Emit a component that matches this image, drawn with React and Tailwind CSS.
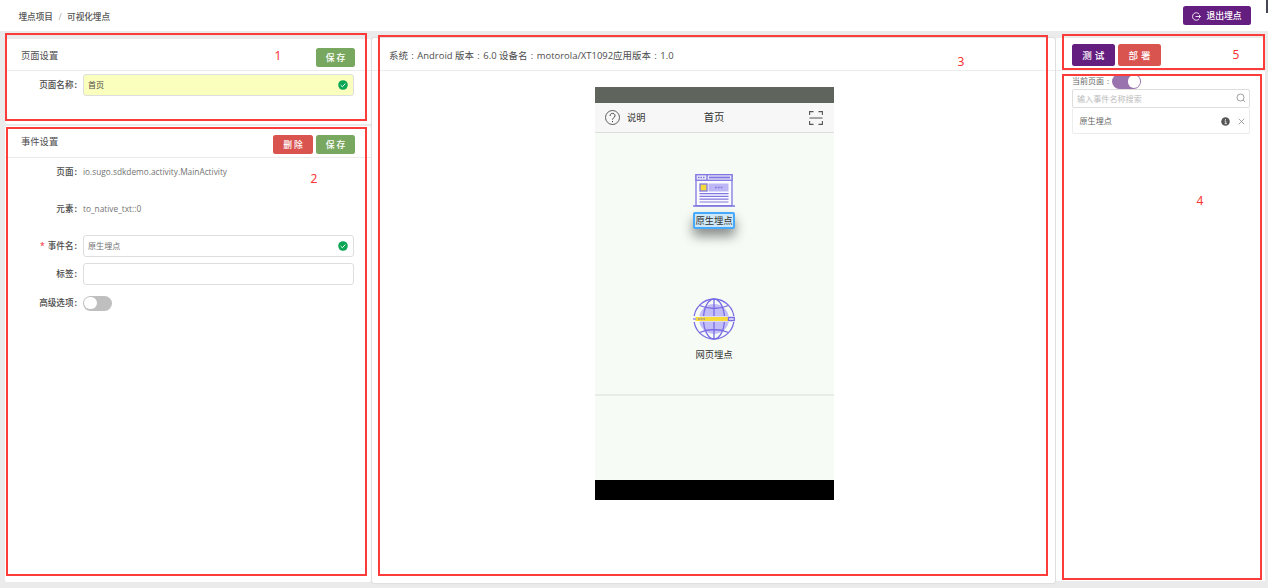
import React from 'react';

const CheckBadge = () => (
  <svg className="h-[10px] w-[10px]" viewBox="0 0 18 18">
    <circle cx="9" cy="9" r="8.6" fill="#0aa653" />
    <path d="M4.8 9.2l3 3 5.4-5.8" fill="none" stroke="#fff" strokeWidth="1.7" />
  </svg>
);

const Button = ({ className, children }) => (
  <button className={`flex items-center justify-center rounded-[2.5px] pt-px font-medium text-white ${className}`}>{children}</button>
);

const Colon = () => (
  <span className="inline-block w-[1em] text-center font-['Open_Sans']">:</span>
);

const Row = ({ label, required, className, children }) => (
  <div className={`flex items-center ${className}`}>
    <div className="w-[78px] shrink-0 whitespace-nowrap text-right text-[8.6px] font-medium text-[#4a4a4a]">
      {required && <span className="mr-[3px] text-[#f5222d]">*</span>}
      {label}<span className="ml-[1px] mr-[1px] font-bold">:</span>
    </div>
    <div className="ml-[5px] flex w-[270.5px] items-center text-[8.3px] text-[#737373]">{children}</div>
  </div>
);

const Field = ({ value, valid, className }) => (
  <div className={`flex h-[22px] w-full items-center justify-between rounded-[3px] border border-[#dedede] pl-[4px] pr-[5px] text-[8.1px] ${className}`}>
    <span>{value}</span>
    {valid && <CheckBadge />}
  </div>
);

const Region = ({ n, box, label }) => (
  <>
    <div className={`pointer-events-none absolute border-2 border-[#fc3b3b] ${box}`} />
    <span className={`absolute w-[10px] text-center font-['Noto_Sans'] text-[12px] leading-[14px] text-[#fa3434] ${label}`}>{n}</span>
  </>
);

const BrowserIcon = () => (
  <svg className="h-[33px] w-[42px]" viewBox="0 0 42 33" fill="none" stroke="#8078e0" strokeWidth="1.3">
    <rect x="3" y="0.7" width="36" height="31" fill="#fbfbff" />
    <rect x="3" y="0.7" width="36" height="5.6" fill="#e9e7fb" />
    <path d="M14 1v5M0 32h42" />
    <path d="M16 3.5h21" strokeWidth="1.8" />
    <path d="M5 3.5h7" strokeDasharray="1.5 1" />
    <rect x="15.5" y="9.5" width="20" height="8" fill="#bdb8f5" stroke="none" />
    <path d="M22 13.5h7.5" strokeDasharray="1.8 1" />
    <rect x="7" y="10" width="7" height="7" fill="#f4da3c" />
    <path d="M6.5 19.6h29M6.5 22.4h29M6.5 25.2h29M6.5 28h29" strokeWidth="1.2" />
  </svg>
);

const GlobeIcon = () => (
  <svg className="h-[42px] w-[42px]" viewBox="0 0 42 42" fill="none" stroke="#786de3" strokeWidth="1.3">
    <circle cx="21" cy="21" r="15" fill="#c2bdf6" stroke="none" />
    <circle cx="21" cy="21" r="20" />
    <ellipse cx="21" cy="21" rx="10.5" ry="20" />
    <path d="M21 1v40M6.5 7.5Q21 13.5 35.5 7.5M6.5 34.5Q21 28.5 35.5 34.5" />
    <path d="M0 21h7M35 21h7" stroke="#f6fbf6" strokeWidth="6" />
    <path d="M7 21h28" stroke="#dedbf9" strokeWidth="6" />
    <path d="M2.5 21h33" stroke="#f5dc3b" strokeWidth="4" />
    <path d="M0 21h3" stroke="#a19ae8" strokeWidth="1.6" />
    <path d="M5 21h7" stroke="#a18f87" strokeWidth="1.6" strokeDasharray="1.7 1" />
    <rect x="35.5" y="19.4" width="5.8" height="3.2" fill="#d6d2fa" />
  </svg>
);

export default function App() {
  return (
    <div className="relative flex h-[588px] w-[1268px] flex-col overflow-hidden bg-[#ebebeb] font-['Open_Sans','Noto_Sans_CJK_SC',sans-serif] leading-none text-[#4d4d4d]">
      <header className="flex h-[31px] shrink-0 items-center justify-between bg-white pl-[18.5px] pr-[17px]">
        <div className="flex items-center pt-[3px] text-[8.6px] font-medium text-[#555]">
          <span>埋点项目</span>
          <span className="mx-[5.5px] font-normal text-[#aaa]">/</span>
          <span>可视化埋点</span>
        </div>
        <Button className="h-[19px] w-[68px] gap-[5px] bg-[#641e7f] text-[8.8px]">
          <svg className="h-[9px] w-[9px]" viewBox="0 0 18 18" fill="none" stroke="#fff" strokeWidth="1.7">
            <path d="M14.3 4.2A7.5 7.5 0 1 0 14.3 13.8M7 9h10M14 6l3 3-3 3" />
          </svg>
          退出埋点
        </Button>
      </header>

      <main className="flex items-start pl-[5px] pt-[8px]">
        <div className="flex w-[366px] flex-col gap-[2px]">
          <section className="h-[85px] rounded-[2px] bg-white">
            <div className="flex h-[32px] justify-between border-b border-[#ececec] pl-[16px] pr-[16px]">
              <h2 className="pt-[12px] text-[9.3px]">页面设置</h2>
              <Button className="mt-[9px] h-[19px] w-[39px] gap-[2px] bg-[#78a860] text-[8.8px]"><span>保</span><span>存</span></Button>
            </div>
            <div className="-ml-[5px]">
              <Row label="页面名称" className="mt-[3px] h-[22px]">
                <Field value="首页" valid className="bg-[#faffbd] text-[#4d4d45]" />
              </Row>
            </div>
          </section>
          <section className="h-[456px] rounded-[2px] bg-white">
            <div className="flex h-[32px] border-b border-[#ececec] pl-[16px] pr-[16px]">
              <h2 className="flex-1 pt-[11px] text-[9.3px]">事件设置</h2>
              <Button className="mr-[3px] mt-[9px] h-[19px] w-[40px] gap-[2px] bg-[#d9534f] text-[8.8px]"><span>删</span><span>除</span></Button>
              <Button className="mt-[9px] h-[19px] w-[39px] gap-[2px] bg-[#78a860] text-[8.8px]"><span>保</span><span>存</span></Button>
            </div>
            <div className="-ml-[5px]">
              <Row label="页面" className="mt-[4px] h-[20px]">io.sugo.sdkdemo.activity.MainActivity</Row>
              <Row label="元素" className="mt-[17px] h-[20px]">to_native_txt::0</Row>
              <Row label="事件名" required className="mt-[16px] h-[22px]">
                <Field value="原生埋点" valid className="bg-white" />
              </Row>
              <Row label="标签" className="mt-[6px] h-[22px]">
                <Field value="" className="bg-white" />
              </Row>
              <Row label="高级选项" className="mt-[8px] h-[20px]">
                <span className="flex h-[15px] w-[29px] items-center rounded-full bg-[#bfbfbf] p-px">
                  <span className="h-[12.5px] w-[12.5px] rounded-full bg-white" />
                </span>
              </Row>
            </div>
          </section>
        </div>

        <section className="ml-[1px] -mt-px flex h-[545px] w-[683px] flex-col rounded-[2px] bg-white shadow-[0_0_2px_rgba(0,0,0,0.2)]">
          <div className="h-[33px] shrink-0 whitespace-nowrap border-b border-[#ececec] pl-[17px] pt-[13px] text-[9.45px]">
            系统<Colon />Android 版本<Colon />6.0 设备名<Colon />motorola/XT1092应用版本<Colon />1.0
          </div>
          <div className="ml-[222.5px] mt-[16px] flex h-[413px] w-[239px] flex-col bg-[#f6fbf6]">
            <div className="h-[16px] bg-[#5f645d]" />
            <div className="grid h-[30px] grid-cols-3 items-center border-b border-[#dcdedc] bg-[#f7f7f7] px-[10.5px] text-[#333]">
              <div className="flex items-center gap-[7px] text-[9.2px]">
                <svg className="h-[15px] w-[15px]" viewBox="0 0 30 30" fill="none" stroke="#444" strokeWidth="1.7">
                  <circle cx="15" cy="15" r="14" />
                  <path d="M10 12c0-7 10-7 10-.5 0 4-5 4-5 7.7M15 22v2.3" strokeWidth="2" />
                </svg>
                说明
              </div>
              <div className="text-center text-[10.3px]">首页</div>
              <svg className="h-[14px] w-[14px] justify-self-end" viewBox="0 0 28 28" fill="none" stroke="#555" strokeWidth="2.2">
                <path d="M1.2 8V1.2H9M19 1.2h7.8V8M1.2 20v6.8H9M19 26.8h7.8V20M1 14h26" />
              </svg>
            </div>
            <div className="flex h-[263px] flex-col items-center border-b-2 border-[#e9ece9] pt-[41px] text-[9.3px] text-[#333]">
              <BrowserIcon />
              <div className="mt-[4.5px] flex h-[17px] w-[42px] items-center justify-center whitespace-nowrap rounded-[2px] border-2 border-[#47a9fb] bg-[#cee7f6] pt-px shadow-[0_7px_12px_rgba(0,0,0,0.45)]">原生埋点</div>
              <div className="mt-[69.5px]"><GlobeIcon /></div>
              <div className="mt-[10px]">网页埋点</div>
            </div>
            <div className="flex-1" />
            <div className="h-[20px] bg-black" />
          </div>
        </section>

        <aside className="ml-[1px] -mt-px h-[543px] w-[209px] bg-white">
          <div className="flex h-[33px] items-start gap-[3.5px] border-b border-[#ececec] pl-[16px] pt-[6px]">
            <Button className="h-[21.5px] w-[42.5px] gap-[3px] bg-[#641e7f] text-[9.5px]"><span>测</span><span>试</span></Button>
            <Button className="h-[21.5px] w-[43px] gap-[3px] bg-[#d9534f] text-[9.5px]"><span>部</span><span>署</span></Button>
          </div>
          <div className="w-[193.5px] pl-[16px]">
            <div className="mt-[3px] flex h-[15px] items-center text-[8px] text-[#666]">
              <span className="w-[40px] whitespace-nowrap pb-px">当前页面<Colon /></span>
              <span className="flex h-[14.5px] w-[29px] items-center justify-end rounded-full bg-[#9973ad] p-px">
                <span className="h-[12.5px] w-[12.5px] rounded-full bg-white" />
              </span>
            </div>
            <div className="flex h-[19px] items-center justify-between rounded-[2px] border border-[#dedede] pl-[4px] pr-[3px] text-[8.1px] text-[#bdbdbd]">
              <span className="pt-px">输入事件名称搜索</span>
              <svg className="mb-px h-[10px] w-[10px]" viewBox="0 0 20 20" fill="none" stroke="#777" strokeWidth="1.4">
                <circle cx="9" cy="9" r="7" /><path d="M14.2 14.2L18 18" />
              </svg>
            </div>
            <div className="flex h-[26px] items-center rounded-[2px] border border-t-0 border-[#ececec] pl-[6.5px] pr-[4px] pt-px text-[8.1px] text-[#666]">
              <span className="flex-1">原生埋点</span>
              <svg className="mr-[8px] h-[9px] w-[9px]" viewBox="0 0 18 18">
                <circle cx="9" cy="9" r="8.5" fill="#555" />
                <path d="M9 4v2.5M7 8h2.5v5M7 13.3h5" stroke="#fff" strokeWidth="1.5" fill="none" />
              </svg>
              <svg className="h-[7px] w-[7px]" viewBox="0 0 14 14" stroke="#888" strokeWidth="1.5"><path d="M1.5 1.5l11 11M12.5 1.5l-11 11" /></svg>
            </div>
          </div>
        </aside>
      </main>

      <div className="absolute right-0 top-0 h-[13px] w-[2px] bg-[#454854]" />
      <Region n="1" box="left-[5px] top-[33px] h-[88px] w-[362px]" label="left-[273px] top-[49px]" />
      <Region n="2" box="left-[6px] top-[127px] h-[449px] w-[361px]" label="left-[309px] top-[172px]" />
      <Region n="3" box="left-[378px] top-[35px] h-[541px] w-[670px]" label="left-[956px] top-[55px]" />
      <Region n="4" box="left-[1062px] top-[74px] h-[506px] w-[200px]" label="left-[1195px] top-[194px]" />
      <Region n="5" box="left-[1062px] top-[34px] h-[36px] w-[203px]" label="left-[1231px] top-[48px]" />
    </div>
  );
}
